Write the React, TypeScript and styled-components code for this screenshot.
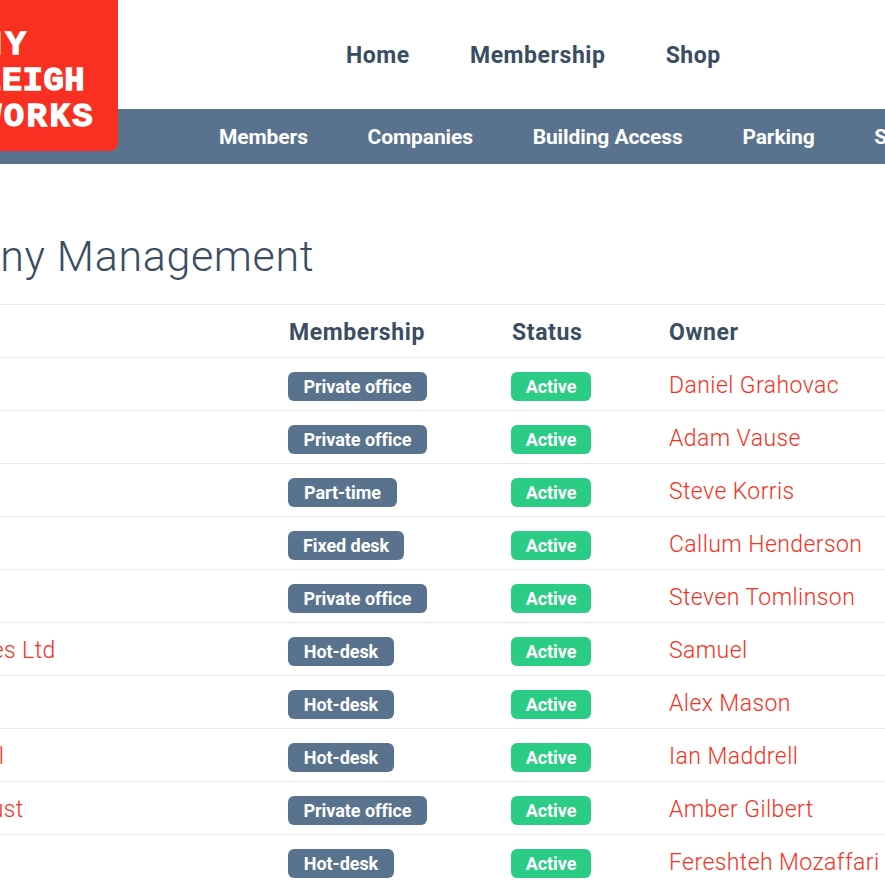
import React from "react";
import styled, { createGlobalStyle } from "styled-components";

const Global = createGlobalStyle`
  html, body { margin: 0; padding: 0; background: #fff; overflow: hidden; height: 885px; }
  body { font-family: "Roboto", "Liberation Sans", sans-serif; color: #3a4d63; }
`;

const Page = styled.div`
  width: 1140px;
  margin-left: -140px;
  position: relative;
`;

const Logo = styled.a`
  position: absolute;
  left: 0;
  top: 0;
  z-index: 2;
  box-sizing: border-box;
  width: 258px;
  height: 151px;
  padding: 27px 0 0 121px;
  background: #f93021;
  border-radius: 0 0 8px 0;
  color: #fff;
  font-family: "Liberation Mono", monospace;
  font-weight: 700;
  font-size: 34px;
  line-height: 36px;
  -webkit-text-stroke: 1.3px #fff;
`;

const LogoLine = styled.div<{ $spacing: number }>`
  white-space: nowrap;
  letter-spacing: ${(p) => p.$spacing}px;
`;

const TopBar = styled.div`
  box-sizing: border-box;
  height: 109px;
  padding: 2px 0 0 486px;
  display: flex;
  align-items: center;
  gap: 60.2px;
`;

const TopLink = styled.a`
  font-size: 23px;
  font-weight: 700;
  letter-spacing: 0.55px;
  color: #3a4d63;
`;

const SubBar = styled.div`
  height: 55px;
  background: #59738f;
  display: flex;
  align-items: center;
  gap: 59.7px;
  padding-left: 359px;
  white-space: nowrap;
`;

const SubLink = styled.a`
  font-size: 21px;
  font-weight: 700;
  letter-spacing: -0.1px;
  color: #fff;
`;

const Content = styled.main`
  padding: 64px 0 0 0;
`;

const Title = styled.h1`
  margin: 0;
  height: 76px;
  font-size: 43px;
  line-height: 56px;
  font-weight: 300;
  letter-spacing: 0.65px;
  color: #3a4d63;
`;

const Table = styled.table`
  width: 1140px;
  table-layout: fixed;
  border-collapse: collapse;
  border-top: 1px solid #ebebef;
`;

const Head = styled.th`
  height: 50px;
  padding: 2px 0 0 1px;
  text-align: left;
  font-size: 23px;
  font-weight: 700;
  letter-spacing: 0.6px;
  color: #3a4d63;
  &:last-child { padding-left: 0; }
`;

const Row = styled.tr`
  border-top: 1px solid #ebebef;
`;

const Cell = styled.td`
  height: 50px;
  padding: 2px 0 0 0;
  white-space: nowrap;
`;

const BadgeCell = styled.td`
  height: 38px;
  padding: 14px 0 0 0;
  vertical-align: top;
  white-space: nowrap;
`;

const TextLink = styled.a`
  font-size: 23px;
  font-weight: 300;
  letter-spacing: 0.42px;
  color: #f93021;
`;

const Badge = styled.span<{ $kind: "plan" | "status"; $width: number }>`
  display: flex;
  align-items: center;
  justify-content: center;
  box-sizing: border-box;
  height: 29px;
  width: ${(p) => p.$width}px;
  border-radius: 6px;
  background: ${(p) => (p.$kind === "plan" ? "#59738f" : "#2bcc85")};
  color: #fff;
  font-size: 18px;
  font-weight: 700;
  letter-spacing: -0.05px;
`;

const planWidth: Record<string, number> = {
  "Private office": 139,
  "Part-time": 109,
  "Fixed desk": 116,
  "Hot-desk": 106,
};

const rows = [
  { company: "", plan: "Private office", owner: "Daniel Grahovac" },
  { company: "", plan: "Private office", owner: "Adam Vause" },
  { company: "", plan: "Part-time", owner: "Steve Korris" },
  { company: "", plan: "Fixed desk", owner: "Callum Henderson" },
  { company: "", plan: "Private office", owner: "Steven Tomlinson" },
  { company: "Essex Services Ltd", plan: "Hot-desk", owner: "Samuel" },
  { company: "", plan: "Hot-desk", owner: "Alex Mason" },
  { company: "Leith Hospital", plan: "Hot-desk", owner: "Ian Maddrell" },
  { company: "Ann Leigh Trust", plan: "Private office", owner: "Amber Gilbert" },
  { company: "", plan: "Hot-desk", owner: "Fereshteh Mozaffari" },
];

export default function App() {
  return (
    <Page>
      <Global />
      <Logo>
        <LogoLine $spacing={4}>MY</LogoLine>
        <LogoLine $spacing={0.4}>LEIGH</LogoLine>
        <LogoLine $spacing={2.4}>WORKS</LogoLine>
      </Logo>
      <TopBar>
        <TopLink>Home</TopLink>
        <TopLink>Membership</TopLink>
        <TopLink>Shop</TopLink>
      </TopBar>
      <SubBar>
        <SubLink>Members</SubLink>
        <SubLink>Companies</SubLink>
        <SubLink>Building Access</SubLink>
        <SubLink>Parking</SubLink>
        <SubLink>Shop</SubLink>
      </SubBar>
      <Content>
        <Title>Company Management</Title>
        <Table>
          <colgroup>
            <col style={{ width: 428 }} />
            <col style={{ width: 223 }} />
            <col style={{ width: 158 }} />
            <col />
          </colgroup>
          <thead>
            <tr>
              <Head>Company</Head>
              <Head>Membership</Head>
              <Head>Status</Head>
              <Head>Owner</Head>
            </tr>
          </thead>
          <tbody>
            {rows.map((r) => (
              <Row key={r.owner}>
                <Cell>
                  <TextLink>{r.company}</TextLink>
                </Cell>
                <BadgeCell>
                  <Badge $kind="plan" $width={planWidth[r.plan]}>{r.plan}</Badge>
                </BadgeCell>
                <BadgeCell>
                  <Badge $kind="status" $width={80}>Active</Badge>
                </BadgeCell>
                <Cell>
                  <TextLink>{r.owner}</TextLink>
                </Cell>
              </Row>
            ))}
          </tbody>
        </Table>
      </Content>
    </Page>
  );
}
